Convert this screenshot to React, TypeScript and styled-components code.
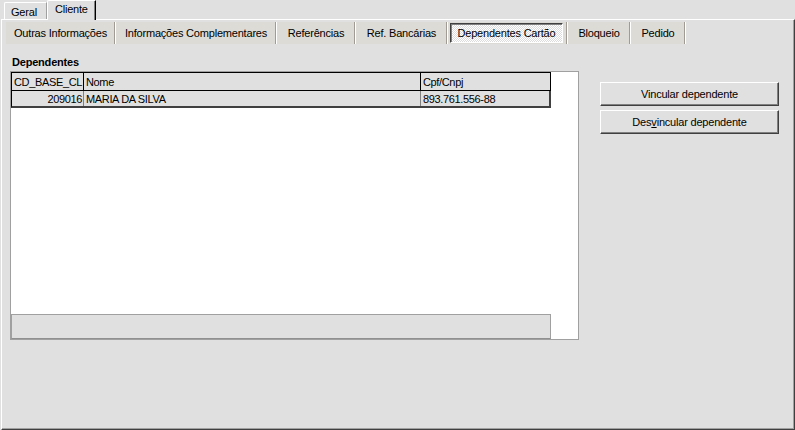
import React from 'react';
import styled, { createGlobalStyle } from 'styled-components';

const GlobalStyle = createGlobalStyle`
  html, body {
    margin: 0;
    padding: 0;
    background: #e0e0e0;
  }
  body {
    font-family: "Liberation Sans", Arial, sans-serif;
    font-size: 11px;
    letter-spacing: -0.2px;
    color: #000;
  }
`;

const Frame = styled.div`
  width: 795px;
  height: 430px;
  padding-left: 1px;
  box-sizing: border-box;
  display: flex;
  flex-direction: column;
  background: #e0e0e0;
  overflow: hidden;
`;

// aba superior (Geral / Cliente)
const TopTabBar = styled.div`
  display: flex;
  align-items: flex-end;
  height: 19px;
  padding-left: 3px;
`;

const TopTab = styled.div<{ $active?: boolean }>`
  box-sizing: border-box;
  height: ${(p) => (p.$active ? '20px' : '17px')};
  margin-bottom: ${(p) => (p.$active ? '-1px' : '0')};
  padding: ${(p) => (p.$active ? '2px 7px 0 7px' : '3px 9px 0 6px')};
  border-top: 1px solid #fff;
  border-left: 1px solid #fff;
  border-right: 1px solid ${(p) => (p.$active ? '#000' : '#a0a0a0')};
  border-top-left-radius: 2px;
  background: #e0e0e0;
  position: relative;
  z-index: ${(p) => (p.$active ? 1 : 0)};
  box-shadow: ${(p) => (p.$active ? 'inset -1px 0 0 #808080' : 'none')};
  line-height: 13px;
  white-space: nowrap;
`;

const Page = styled.div`
  flex: 1;
  box-sizing: border-box;
  border-top: 1px solid #fff;
  border-left: 1px solid #fff;
  border-right: 1px solid #404040;
  border-bottom: 1px solid #404040;
  box-shadow: inset -1px -1px 0 #a0a0a0;
  padding: 2px 0 0 4px;
  display: flex;
  flex-direction: column;
`;

const SubTabBar = styled.div`
  display: flex;
  height: 22px;
`;

const SubTab = styled.div<{ $width: number }>`
  box-sizing: border-box;
  width: ${(p) => p.$width}px;
  height: 22px;
  display: flex;
  align-items: center;
  justify-content: center;
  background: #dddbd6;
  border-right: 1px solid #fff;
  box-shadow: inset -1px 0 0 #a09c94;
  white-space: nowrap;
`;

const SunkenLabel = styled.div`
  box-sizing: border-box;
  height: 20px;
  margin: 0 4px 0 2px;
  flex: 1;
  display: flex;
  align-items: center;
  justify-content: center;
  border: 1px solid;
  border-color: #404040 #fff #fff #404040;
  box-shadow: inset 1px 1px 0 #808080;
  background-color: #e4e4e4;
  background-image: repeating-conic-gradient(#ffffff 0% 25%, #dcdcdc 0% 50%);
  background-size: 2px 2px;
`;

const Content = styled.div`
  display: flex;
  align-items: flex-start;
  margin: 11px 0 0 4px;
`;

const GridColumn = styled.div`
  display: flex;
  flex-direction: column;
`;

const SectionTitle = styled.div`
  font-weight: bold;
  line-height: 14px;
  padding-left: 2px;
  margin-bottom: 2px;
`;

const GridPanel = styled.div`
  box-sizing: border-box;
  width: 569px;
  height: 269px;
  border: 1px solid #a0a0a0;
  background: #fff;
  display: flex;
  flex-direction: column;
`;

const GridRow = styled.div<{ $header?: boolean }>`
  box-sizing: border-box;
  width: 540px;
  display: grid;
  grid-template-columns: 72px 337px 130px;
  height: ${(p) => (p.$header ? '19px' : '17px')};
  background: #e0e0e0;
  border-left: 1px solid #000;
  border-top: ${(p) => (p.$header ? '1px solid #000' : 'none')};
  border-bottom: ${(p) => (p.$header ? '1px solid #000' : '2px solid #404040')};
`;

const Cell = styled.div<{ $header?: boolean; $right?: boolean }>`
  box-sizing: border-box;
  border-right: 1px solid ${(p) => (p.$header ? '#000' : '#808080')};
  padding: ${(p) => (p.$right ? '0 1px 0 2px' : '0 0 0 2px')};
  letter-spacing: -0.35px;
  display: flex;
  align-items: center;
  justify-content: ${(p) => (p.$right ? 'flex-end' : 'flex-start')};
  white-space: nowrap;
  overflow: hidden;
  &:last-child {
    border-right-color: ${(p) => (p.$header ? '#000' : '#404040')};
    border-right-width: ${(p) => (p.$header ? '1px' : '2px')};
  }
`;

const GridFill = styled.div`
  flex: 1;
`;

const ScrollArea = styled.div`
  box-sizing: border-box;
  width: 540px;
  height: 25px;
  background: #e0e0e0;
  border-top: 1px solid #a0a0a0;
  border-left: 1px solid #a0a0a0;
  border-right: 1px solid #a0a0a0;
  border-bottom: 1px solid #909090;
`;

const ButtonColumn = styled.div`
  display: flex;
  flex-direction: column;
  gap: 4px;
  margin: 27px 0 0 21px;
`;

const Button = styled.button`
  box-sizing: border-box;
  width: 179px;
  height: 24px;
  padding: 0;
  font: inherit;
  letter-spacing: inherit;
  color: #000;
  background: #e0e0e0;
  border: 1px solid;
  border-color: #fff #404040 #404040 #fff;
  box-shadow: inset -1px -1px 0 #808080;
  cursor: default;
`;

const Accel = styled.span`
  text-decoration: underline;
`;

const subTabs = [
  { label: 'Outras Informações', width: 110 },
  { label: 'Informações Complementares', width: 161 },
  { label: 'Referências', width: 79 },
  { label: 'Ref. Bancárias', width: 92 },
  { label: 'Dependentes Cartão', width: 120, active: true },
  { label: 'Bloqueio', width: 63 },
  { label: 'Pedido', width: 55 },
];

const dependentes = [
  { codigo: '209016', nome: 'MARIA DA SILVA', documento: '893.761.556-88' },
];

export default function App() {
  return (
    <>
      <GlobalStyle />
      <Frame>
        <TopTabBar>
          <TopTab>Geral</TopTab>
          <TopTab $active>Cliente</TopTab>
        </TopTabBar>
        <Page>
          <SubTabBar>
            {subTabs.map((t) => (
              <SubTab key={t.label} $width={t.width}>
                {t.active ? <SunkenLabel>{t.label}</SunkenLabel> : t.label}
              </SubTab>
            ))}
          </SubTabBar>
          <Content>
            <GridColumn>
              <SectionTitle>Dependentes</SectionTitle>
              <GridPanel>
                <GridRow $header>
                  <Cell $header>CD_BASE_CL</Cell>
                  <Cell $header>Nome</Cell>
                  <Cell $header>Cpf/Cnpj</Cell>
                </GridRow>
                {dependentes.map((d) => (
                  <GridRow key={d.codigo}>
                    <Cell $right>{d.codigo}</Cell>
                    <Cell>{d.nome}</Cell>
                    <Cell>{d.documento}</Cell>
                  </GridRow>
                ))}
                <GridFill />
                <ScrollArea />
              </GridPanel>
            </GridColumn>
            <ButtonColumn>
              <Button>Vincular dependente</Button>
              <Button>
                Des<Accel>v</Accel>incular dependente
              </Button>
            </ButtonColumn>
          </Content>
        </Page>
      </Frame>
    </>
  );
}
